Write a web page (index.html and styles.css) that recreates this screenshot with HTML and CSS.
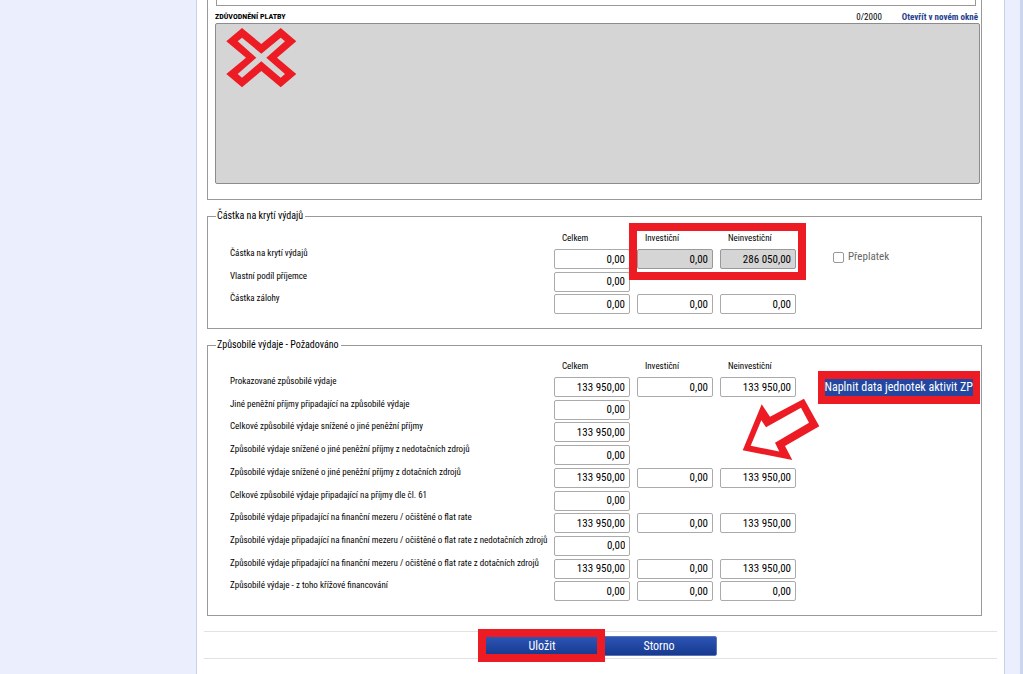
FILE: index.html
```
<!DOCTYPE html>
<html lang="cs">
<head>
<meta charset="utf-8">
<title>Způsobilé výdaje</title>
<link rel="stylesheet" href="styles.css">
</head>
<body>
<div class="page">
  <aside class="side"></aside>
  <main class="content">
    <form class="form">
      <section class="panel panel-reason">
        <div class="prev-field"></div>
        <div class="reason-head">
          <label class="reason-label" for="reason">ZDŮVODNĚNÍ PLATBY</label>
          <span class="counter">0/2000</span>
          <a class="open-link" href="#">Otevřít v novém okně</a>
        </div>
        <div class="reason-box">
          <textarea id="reason" class="reason-text" readonly></textarea>
          <svg class="cross" viewBox="226 28 71 60" aria-hidden="true"><path fill="#ed1c24" fill-rule="evenodd" d="M242 28L261.3 44L280.7 28L296.3 41.3L277 57.7L296.3 74L280.7 87.3L261.3 71L242 87.3L226.3 74L246 57.7L226.3 41.3ZM242 37.7L237.7 41.3L256.3 57.7L237.7 74L242 77.7L261.3 61.3L280.7 77.7L285 74L266.3 57.7L285 41.3L280.7 37.7L261.3 53.7Z"/></svg>
        </div>
      </section>

      <fieldset class="panel panel-cover">
        <legend>Částka na krytí výdajů</legend>
        <div class="heads"><span class="head">Celkem</span><span class="head">Investiční</span><span class="head">Neinvestiční</span></div>
        <div class="rows rows-cover">
          <div class="row"><label for="a1">Částka na krytí výdajů</label><input id="a1" value="0,00"><input class="off" aria-label="Investiční" value="0,00" readonly><input class="off" aria-label="Neinvestiční" value="286 050,00" readonly><label class="over"><input type="checkbox" class="tick">Přeplatek</label></div>
          <div class="row"><label for="a2">Vlastní podíl příjemce</label><input id="a2" value="0,00"></div>
          <div class="row"><label for="a3">Částka zálohy</label><input id="a3" value="0,00"><input aria-label="Investiční" value="0,00"><input aria-label="Neinvestiční" value="0,00"></div>
        </div>
        <div class="frame frame-cover"></div>
      </fieldset>

      <fieldset class="panel panel-cost">
        <legend>Způsobilé výdaje - Požadováno</legend>
        <div class="heads"><span class="head">Celkem</span><span class="head">Investiční</span><span class="head">Neinvestiční</span></div>
        <div class="rows rows-cost">
          <div class="row"><label for="b1">Prokazované způsobilé výdaje</label><input id="b1" value="133 950,00"><input aria-label="Investiční" value="0,00"><input aria-label="Neinvestiční" value="133 950,00"></div>
          <div class="row"><label for="b2">Jiné peněžní příjmy připadající na způsobilé výdaje</label><input id="b2" value="0,00"></div>
          <div class="row"><label for="b3">Celkové způsobilé výdaje snížené o jiné peněžní příjmy</label><input id="b3" value="133 950,00"></div>
          <div class="row"><label for="b4">Způsobilé výdaje snížené o jiné peněžní příjmy z nedotačních zdrojů</label><input id="b4" value="0,00"></div>
          <div class="row"><label for="b5">Způsobilé výdaje snížené o jiné peněžní příjmy z dotačních zdrojů</label><input id="b5" value="133 950,00"><input aria-label="Investiční" value="0,00"><input aria-label="Neinvestiční" value="133 950,00"></div>
          <div class="row"><label for="b6">Celkové způsobilé výdaje připadající na příjmy dle čl. 61</label><input id="b6" value="0,00"></div>
          <div class="row"><label for="b7">Způsobilé výdaje připadající na finanční mezeru / očištěné o flat rate</label><input id="b7" value="133 950,00"><input aria-label="Investiční" value="0,00"><input aria-label="Neinvestiční" value="133 950,00"></div>
          <div class="row"><label for="b8">Způsobilé výdaje připadající na finanční mezeru / očištěné o flat rate z nedotačních zdrojů</label><input id="b8" value="0,00"></div>
          <div class="row"><label for="b9">Způsobilé výdaje připadající na finanční mezeru / očištěné o flat rate z dotačních zdrojů</label><input id="b9" value="133 950,00"><input aria-label="Investiční" value="0,00"><input aria-label="Neinvestiční" value="133 950,00"></div>
          <div class="row"><label for="b10">Způsobilé výdaje - z toho křížové financování</label><input id="b10" value="0,00"><input aria-label="Investiční" value="0,00"><input aria-label="Neinvestiční" value="0,00"></div>
        </div>
        <button type="button" class="fill">Naplnit data jednotek aktivit ZP</button>
        <svg class="arrow" viewBox="742 397 78 63" aria-hidden="true"><path fill="#ed1c24" fill-rule="evenodd" d="M804 397.7L819.3 425.3L785 445L792.3 459L742.7 449.3L761.7 403.3L770 415.7ZM801 406.7L766 426.3L761.3 419.3L750.7 444.7L779.3 450.5L775 441.7L809 421.7Z"/></svg>
      </fieldset>

      <div class="actions">
        <button type="button" class="btn">Uložit</button><button type="button" class="btn">Storno</button>
        <div class="frame frame-save"></div>
      </div>
    </form>
  </main>
  <div class="rail"></div>
</div>
</body>
</html>
```
FILE: styles.css
```
* { box-sizing: border-box; }
body {
  margin: 0;
  background: #fff;
  color: #000;
  font-family: "Roboto Condensed", "Liberation Sans Narrow", Roboto, sans-serif;
  font-size: 9px;
  line-height: 12px;
}
input, textarea, button { font-family: inherit; margin: 0; }
.page { display: flex; min-height: 100vh; }
.side { flex: 0 0 196px; background: #ebeffd; }
.content { flex: 1; min-width: 0; border: 1px solid #c9d1e6; border-width: 0 1px; }
.rail { flex: 0 0 18px; background: #ebeffd; border-right: 3px solid #cbd5ec; }
.form { padding: 0 7px; }
.panel {
  position: relative;
  min-width: 0;
  margin: 0 15px 0 3px;
  padding: 0;
  border: 1px solid #999;
}
.panel-reason { border-top: 0; padding: 0 1px 15px 7px; }
.prev-field { height: 6px; margin: 0 4px 0 1px; border: 1px solid #999; border-top: 0; }
.reason-head { display: flex; align-items: center; height: 17px; padding: 4px 2px 0 0; }
.reason-label { flex: 1; padding-top: 1px; font-size: 8px; font-weight: 700; }
.counter { font-size: 9px; }
.open-link { margin-left: 20px; font-size: 9px; font-weight: 700; color: #1f3f8f; text-decoration: none; }
.reason-box { position: relative; display: flex; }
.reason-text {
  width: 100%;
  height: 161px;
  resize: none;
  border: 1px solid #8c8c8c;
  border-radius: 2px;
  background: #d5d5d5;
}
.cross { position: absolute; left: 11px; top: 5px; width: 71px; height: 60px; }
legend { margin-left: 8px; padding: 0 2px 0 1px; font-size: 10px; line-height: 14px; }
.panel-cover, .panel-cost { margin-top: 9px; }
.heads { display: flex; gap: 7px; margin-left: 346px; padding-top: 8px; height: 25px; }
.panel-cover .heads { padding-top: 9px; height: 26px; }
.head { width: 76px; padding-left: 8px; }
.rows { display: grid; grid-auto-rows: 1fr; padding-left: 22px; margin-bottom: 11px; }
.rows-cover { min-height: 68px; }
.rows-cost { min-height: 227px; }
.row { display: flex; gap: 7px; align-items: flex-start; }
.row > label:first-child { flex: 0 0 317px; white-space: nowrap; margin-top: -2px; }
.row > input {
  width: 76px;
  height: 20px;
  padding: 0 4px;
  border: 1px solid #aaa;
  border-radius: 2px;
  background: #fff;
  color: #000;
  font-size: 11px;
  text-align: right;
}
.row > .off { background: #d5d5d5; border-color: #999; }
.over { display: flex; align-items: center; gap: 4px; margin-left: 30px; font-size: 11px; line-height: 16px; color: #666; }
.tick { appearance: none; width: 11px; height: 11px; border: 1px solid #999; border-radius: 2px; background: #fff; }
.fill {
  position: absolute;
  top: 19px;
  right: 1px;
  padding: 0;
  border: 8px solid #ed1c24;
  border-width: 8px 7px;
  background: #2347a0;
  color: #fff;
  font-size: 12px;
  line-height: 17px;
  white-space: nowrap;
}
.arrow { position: absolute; left: 534px; top: 46px; width: 78px; height: 63px; }
.frame { position: absolute; border: 8px solid #ed1c24; pointer-events: none; }
.frame-cover { left: 421px; top: 0; width: 177px; height: 57px; }
.actions {
  position: relative;
  display: flex;
  justify-content: center;
  gap: 1px;
  margin-top: 15px;
  padding: 4px 0 2px;
  border: 1px solid #e2e2e2;
  border-width: 1px 0;
}
.btn {
  width: 116px;
  height: 20px;
  padding: 0;
  border: 1px solid #5c74b5;
  border-radius: 2px;
  background: linear-gradient(#2c55b5, #173a90);
  color: #fff;
  font-size: 12px;
  line-height: 16px;
}
.frame-save { left: calc(50% - 123px); top: -3px; width: 127px; height: 33px; }
```
